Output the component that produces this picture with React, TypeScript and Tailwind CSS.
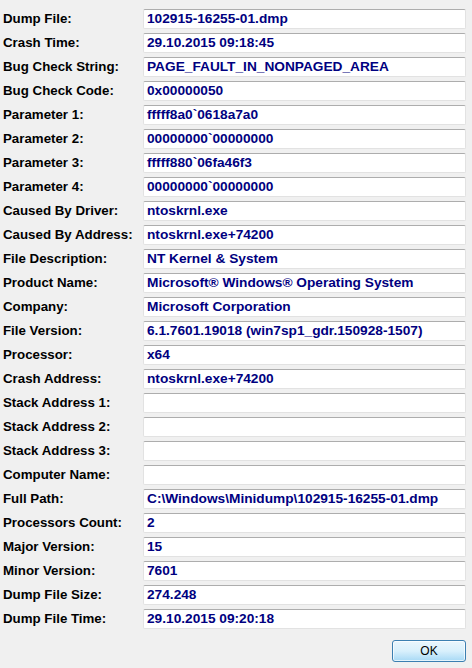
import React from "react";

type Field = { label: string; value: string };

const fields: Field[] = [
  { label: "Dump File:", value: "102915-16255-01.dmp" },
  { label: "Crash Time:", value: "29.10.2015 09:18:45" },
  { label: "Bug Check String:", value: "PAGE_FAULT_IN_NONPAGED_AREA" },
  { label: "Bug Check Code:", value: "0x00000050" },
  { label: "Parameter 1:", value: "fffff8a0`0618a7a0" },
  { label: "Parameter 2:", value: "00000000`00000000" },
  { label: "Parameter 3:", value: "fffff880`06fa46f3" },
  { label: "Parameter 4:", value: "00000000`00000000" },
  { label: "Caused By Driver:", value: "ntoskrnl.exe" },
  { label: "Caused By Address:", value: "ntoskrnl.exe+74200" },
  { label: "File Description:", value: "NT Kernel & System" },
  { label: "Product Name:", value: "Microsoft® Windows® Operating System" },
  { label: "Company:", value: "Microsoft Corporation" },
  { label: "File Version:", value: "6.1.7601.19018 (win7sp1_gdr.150928-1507)" },
  { label: "Processor:", value: "x64" },
  { label: "Crash Address:", value: "ntoskrnl.exe+74200" },
  { label: "Stack Address 1:", value: "" },
  { label: "Stack Address 2:", value: "" },
  { label: "Stack Address 3:", value: "" },
  { label: "Computer Name:", value: "" },
  { label: "Full Path:", value: "C:\\Windows\\Minidump\\102915-16255-01.dmp" },
  { label: "Processors Count:", value: "2" },
  { label: "Major Version:", value: "15" },
  { label: "Minor Version:", value: "7601" },
  { label: "Dump File Size:", value: "274.248" },
  { label: "Dump File Time:", value: "29.10.2015 09:20:18" },
];

export default function App() {
  return (
    <div
      className="w-[472px] h-[668px] bg-[#f0f0f0] pt-[9px] pl-[3px] pr-[6px]"
      style={{ fontFamily: '"Liberation Sans", Arial, sans-serif' }}
    >
      <div className="flex flex-col gap-[4px]">
        {fields.map((f) => (
          <div key={f.label} className="flex items-center h-[20px]">
            <div className="w-[140px] shrink-0 text-[13.3px] font-bold text-black leading-none">
              {f.label}
            </div>
            <div className="flex-1 h-[20px] bg-white border border-[#e2e2e2] border-t-[#adadad] rounded-[2px] flex items-center pl-[3px] overflow-hidden">
              <span className="text-[13.7px] font-bold text-[#000080] leading-none whitespace-nowrap">
                {f.value}
              </span>
            </div>
          </div>
        ))}
      </div>
      <div className="flex justify-end mt-[11px]">
        <button className="w-[74px] h-[22px] rounded-[3px] border border-[#3c7fb1] bg-gradient-to-b from-[#eaf6fd] via-[#d9f0fc] to-[#a7d9f5] text-[12px] text-black leading-none shadow-[inset_0_0_0_1px_rgba(255,255,255,0.7)]">
          OK
        </button>
      </div>
    </div>
  );
}
